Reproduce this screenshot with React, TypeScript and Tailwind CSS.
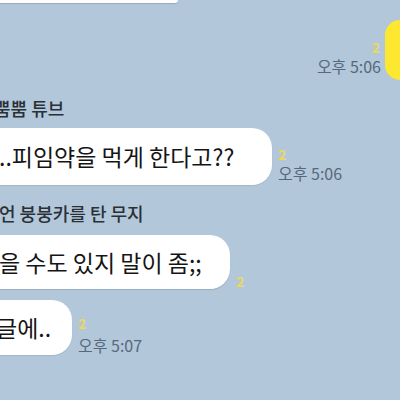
import React from "react";

const font = { fontFamily: '"Noto Sans CJK KR", "Noto Sans", sans-serif' };

function Read({ className = "" }: { className?: string }) {
  return (
    <div className={`text-[14px] leading-[16px] font-bold text-[#ecd85c] ${className}`}>2</div>
  );
}

function Time({ t }: { t: string }) {
  return <div className="text-[16px] leading-[19px] text-[#56687a]">{t}</div>;
}

export default function App() {
  return (
    <div
      className="w-[400px] h-[400px] overflow-hidden bg-[#b2c7da] flex flex-col"
      style={font}
    >
      <div className="h-[3px] w-[178px] bg-white rounded-br-[12px] shadow-[0_1px_1px_rgba(0,0,0,0.15)]" />

      <div className="mt-[17px] flex justify-end items-end gap-[4px]">
        <div className="flex flex-col items-end pb-[4px]">
          <Read className="mb-[2px] mr-[1px]" />
          <Time t="오후 5:06" />
        </div>
        <div className="w-[15px] h-[60px] bg-[#fde731] rounded-l-[22px]" />
      </div>

      <div className="mt-[17px] h-[22px] text-[18px] leading-[22px] font-medium text-[#2a3036] -ml-[6px] whitespace-nowrap">
        뿜뿜 튜브
      </div>

      <div className="mt-[9px] flex items-end gap-[6px]">
        <div className="w-[272px] h-[57px] bg-white rounded-r-[20px] flex items-center text-[23px] text-[#151515] whitespace-nowrap shadow-[0_1px_1px_rgba(0,0,0,0.08)]">
          <span className="-ml-[1px]">..피임약을 먹게 한다고??</span>
        </div>
        <div className="flex flex-col items-start pb-[2px]">
          <Read className="mb-[2px]" />
          <Time t="오후 5:06" />
        </div>
      </div>

      <div className="mt-[17px] h-[22px] text-[18px] leading-[22px] font-medium text-[#2a3036] -ml-[1px] whitespace-nowrap">
        언 붕붕카를 탄 무지
      </div>

      <div className="mt-[11px] flex items-end gap-[6px]">
        <div className="w-[230px] h-[54px] bg-white rounded-r-[20px] flex items-center text-[23px] text-[#151515] whitespace-nowrap shadow-[0_1px_1px_rgba(0,0,0,0.12)]">
          <span className="-ml-[1px]">을 수도 있지 말이 좀;;</span>
        </div>
        <div className="flex flex-col items-start pb-[0px]">
          <Read />
        </div>
      </div>

      <div className="mt-[11px] flex items-end gap-[6px]">
        <div className="w-[72px] h-[55px] bg-white rounded-r-[20px] flex items-center text-[23px] text-[#151515] whitespace-nowrap shadow-[0_1px_1px_rgba(0,0,0,0.08)]">
          <span className="-ml-[4px]">글에..</span>
        </div>
        <div className="flex flex-col items-start pb-[0px]">
          <Read className="mb-[5px]" />
          <Time t="오후 5:07" />
        </div>
      </div>
    </div>
  );
}
